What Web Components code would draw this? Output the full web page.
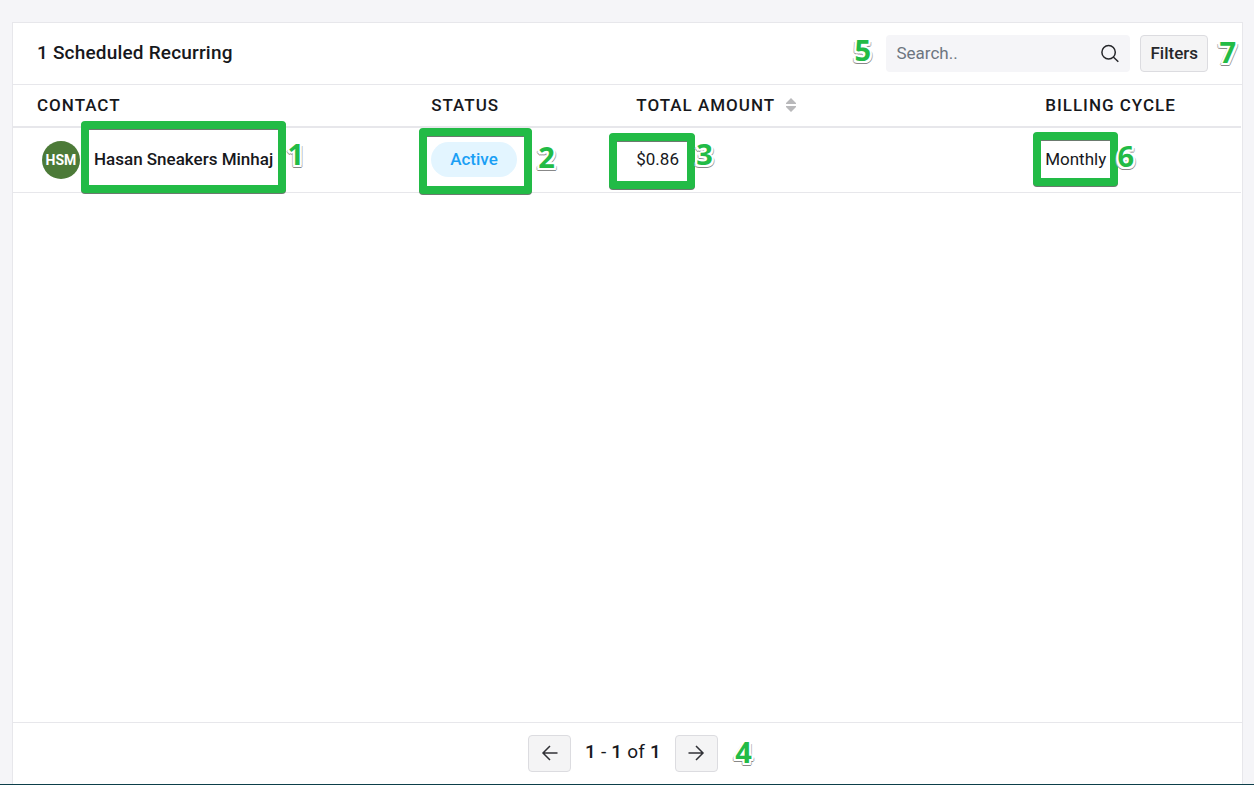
<!DOCTYPE html>
<html lang="en">
<head>
<meta charset="utf-8">
<title>Scheduled Recurring</title>
<style>
  body { margin: 0; background: #f5f5f8; color: #17181c; font: 17px/24px Roboto, "Liberation Sans", sans-serif; }
</style>
</head>
<body>
<recurring-page>
  <list-toolbar slot="head" heading="1 Scheduled Recurring"></list-toolbar>
  <recurring-table></recurring-table>
  <page-nav slot="foot"></page-nav>
</recurring-page>

<script>
const define = (name, html, setup) => customElements.define(name, class extends HTMLElement {
  constructor() {
    super();
    this.attachShadow({ mode: "open" }).innerHTML = html;
  }
  connectedCallback() { if (setup) setup(this, this.shadowRoot); }
});

define("recurring-page", `
  <style>
    :host { display: flex; flex-direction: column; box-sizing: border-box; min-height: 100vh;
            padding: 22px 11px 0 12px; border-bottom: 1px solid #0d3f4a; }
    section { flex: 1; display: flex; flex-direction: column; background: #fff;
              border: 1px solid #e7e7eb; border-bottom: 0; }
    main { flex: 1; }
  </style>
  <section>
    <slot name="head"></slot>
    <main><slot></slot></main>
    <slot name="foot"></slot>
  </section>`);

/* Numbered marker drawn over the page */
define("step-number", `
  <style>
    :host { position: absolute; z-index: 3; color: #22bb46; font: 700 29px/32px "Open Sans", "Noto Sans", sans-serif;
      text-shadow: 2px 0 #fff, -2px 0 #fff, 0 2px #fff, 0 -2px #fff, 1px 1px #fff, -1px 1px #fff, 2px 2px #fff, -2px 2px #fff,
                   0 3px #888, 2px 3px #888, -2px 3px #888, 3px 2px #bbb, -3px 2px #bbb; }
  </style><slot></slot>`);

/* Green frame around the slotted content */
define("call-out", `
  <style>
    :host { display: inline-block; position: relative; }
    i { position: absolute; z-index: 2; inset: var(--frame); border: 8px solid #22bb46; border-radius: 4px;
        filter: drop-shadow(0 1px 0 #6b7a6e); pointer-events: none; }
  </style><slot></slot><i></i>`);

define("list-toolbar", `
  <style>
    :host { display: flex; align-items: center; padding: 12px 34px 12px 24px; border-bottom: 1px solid #e7e7eb; }
    h1 { flex: 1; margin: 0; padding-bottom: 2px; font-size: 19px; line-height: 35px; font-weight: 500; letter-spacing: .01em; }
    form { display: flex; gap: 10px; position: relative; }
    .search { display: flex; align-items: center; width: 244px; height: 37px; box-sizing: border-box;
              padding: 0 10px; background: #f5f5f8; border-radius: 4px; }
    input { flex: 1; min-width: 0; border: 0; padding: 0 0 2px; background: none; font: inherit; color: inherit; outline: 0; }
    input::placeholder { color: #6d7580; opacity: 1; }
    svg { width: 20px; height: 20px; }
    button { height: 37px; padding: 0 9px 2px; border: 1px solid #dcdce0; border-radius: 4px; background: #f4f4f5;
             font: inherit; font-weight: 500; color: #26272b; }
    .five { left: -32px; top: -1px; }
    .seven { right: -28px; top: 1px; }
  </style>
  <h1></h1>
  <form>
    <step-number class="five">5</step-number>
    <label class="search">
      <input type="text" aria-label="Search" placeholder="Search..">
      <svg viewBox="0 0 20 20" fill="none" stroke="#26272b" stroke-width="1.5"><circle cx="8.6" cy="8.2" r="6.7"/><path d="M13.3 13l5 4.8"/></svg>
    </label>
    <button type="button">Filters</button>
    <step-number class="seven">7</step-number>
  </form>`,
  (el, root) => { root.querySelector("h1").textContent = el.getAttribute("heading"); });

define("recurring-table", `
  <style>
    :host { display: block; padding-right: 1px; }
    table { width: 100%; table-layout: fixed; border-collapse: separate; border-spacing: 0; }
    .contact { width: 32.1%; } .status { width: 16.7%; } .amount { width: 33.3%; }
    th, td { box-sizing: border-box; padding: 0 0 2px 24px; text-align: left; white-space: nowrap; }
    th { height: 43px; border-bottom: 2px solid #e7e7eb; font-weight: 500; letter-spacing: 1px; }
    td { height: 65px; border-bottom: 1px solid #e7e7eb; vertical-align: middle; }
    td:first-child { padding-bottom: 0; }
    .person { display: flex; align-items: center; gap: 14px; padding-left: 5px; }
    .avatar { width: 38px; height: 38px; border-radius: 50%; background: #4c7a38; color: #fff;
              font-size: 14px; font-weight: 700; line-height: 38px; text-align: center; }
    .name { padding-bottom: 2px; font-weight: 500; --frame: -26px -13px -20px; }
    .pill { display: block; padding: 0 19px; border-radius: 18px; background: #e3f5ff; color: #1a9ff5;
            font-weight: 500; line-height: 35px; }
    .state { --frame: -14px -15px -17px -12px; }
    .price { --frame: -14px -16px -18px -27px; }
    .cycle { --frame: -15px -12px; }
    .sort { width: 10px; height: 14px; margin-left: 11px; vertical-align: -1px; }
    .name step-number { right: -31px; top: -9px; }
    .state step-number { right: -38px; top: -1px; }
    .price step-number { right: -34px; top: -9px; }
    .cycle step-number { right: -28px; top: -7px; }
  </style>
  <table>
    <colgroup><col class="contact"><col class="status"><col class="amount"><col></colgroup>
    <thead><tr>
      <th scope="col">CONTACT</th>
      <th scope="col">STATUS</th>
      <th scope="col">TOTAL AMOUNT<svg class="sort" viewBox="0 0 10 14" fill="#b9b9bb"><path d="M5 0l5 5v1H0V5zM0 8h10v1l-5 5-5-5z"/></svg></th>
      <th scope="col">BILLING CYCLE</th>
    </tr></thead>
    <tbody><tr>
      <td><div class="person"><span class="avatar">HSM</span><call-out class="name">Hasan Sneakers Minhaj<step-number>1</step-number></call-out></div></td>
      <td><call-out class="state"><span class="pill">Active</span><step-number>2</step-number></call-out></td>
      <td><call-out class="price">$0.86<step-number>3</step-number></call-out></td>
      <td><call-out class="cycle">Monthly<step-number>6</step-number></call-out></td>
    </tr></tbody>
  </table>`);

define("page-nav", `
  <style>
    :host { display: block; border-top: 1px solid #e7e7eb; padding: 12px 0; }
    nav { display: flex; align-items: center; justify-content: center; gap: 14px; position: relative; width: max-content; margin: 0 auto; padding-right: 9px; }
    button { width: 43px; height: 37px; padding: 0 0 2px; border: 1px solid #dcdce0; border-radius: 4px; background: #f4f4f5; color: #303136; }
    svg { display: block; width: 18px; height: 18px; margin: auto; fill: none; stroke: currentColor; stroke-width: 1.5; }
    span { padding-bottom: 3px; font-size: 19px; letter-spacing: .01em; }
    b { font-weight: 500; }
    step-number { right: -25px; top: 1px; }
  </style>
  <nav aria-label="Pages">
    <button type="button" aria-label="Previous page"><svg viewBox="0 0 18 18"><path d="M16.5 9H2M9 2L2 9l7 7"/></svg></button>
    <span><b>1</b> - <b>1</b> of <b>1</b></span>
    <button type="button" aria-label="Next page"><svg viewBox="0 0 18 18"><path d="M1.500 9H16M9 2l7 7-7 7"/></svg></button>
    <step-number>4</step-number>
  </nav>`);
</script>
</body>
</html>
